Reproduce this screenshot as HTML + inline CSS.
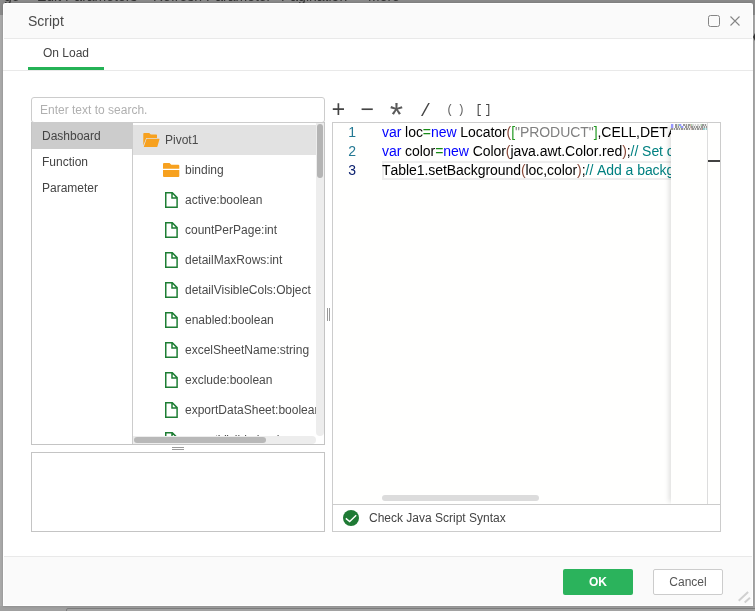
<!DOCTYPE html>
<html><head><meta charset="utf-8">
<style>
*{box-sizing:border-box;margin:0;padding:0}
html,body{width:755px;height:611px;overflow:hidden}
body{background:#ababab;font-family:"Liberation Sans",Arial,sans-serif;font-size:12px;color:#444;position:relative}
.abs{position:absolute}
#topbg{left:0;top:0;width:755px;height:15px;background:#8b8b8b}
#toptxt{will-change:transform;left:0;top:-12px;font-size:14px;line-height:16px;color:#333;white-space:pre}
#toptxt span{position:absolute;top:0}
#botbg{left:0;top:606px;width:755px;height:5px;background:#a0a0a0}
#botbar{left:66px;top:608px;width:695px;height:6px;background:#a2a2a2;border:1px solid #7c7c7c;border-radius:2px}
#rmark{left:753px;top:33px;width:0;height:0;border-top:4px solid transparent;border-bottom:4px solid transparent;border-right:2px solid #333}
#dlg{left:3px;top:3px;width:750px;height:603px;background:#fff;border-radius:2px 2px 0 0;overflow:hidden;will-change:transform;box-shadow:0 0 3px rgba(0,0,0,.22)}
#hdr{left:1px;top:1px;width:748px;height:35px;background:#fafafa;border-bottom:1px solid #e9e9e9}
#title{left:25px;top:10px;font-size:14px;line-height:16px;color:#4a4a4a}
#tabs{left:0;top:36px;width:750px;height:32px;background:#fff;border-bottom:1px solid #e9e9e9}
#tab{left:40px;top:43px;font-size:12px;line-height:14px;color:#444}
#tabline{left:25px;top:64px;width:76px;height:3px;background:#24b256}
#ftr{left:1px;top:553px;width:748px;height:49px;background:#fafafa;border-top:1px solid #e9e9e9}
.btn{height:26px;width:70px;top:566px;border-radius:2px;font-size:12px;text-align:center;line-height:26px}
#ok{left:560px;background:#2bb35c;color:#fff;font-weight:bold}
#cancel{left:650px;background:#fff;border:1px solid #ccc;color:#555;line-height:24px}
#search{left:28px;top:94px;width:294px;height:26px;border:1px solid #ccc;border-radius:3px;background:#fff;color:#b0b0b0;padding:0 0 0 8px;line-height:24px;font-size:12px}
#tree{left:28px;top:119px;width:294px;height:323px;border:1px solid #c4c4c4;background:#fff;overflow:hidden}
#cats{left:0;top:0;width:101px;height:321px;border-right:1px solid #ccc;background:#fff}
.cat{left:0;width:100px;height:26px;line-height:26px;padding-left:10px;color:#444}
.cat.sel{background:#ccc;left:-1px;width:101px;padding-left:11px}
#list{left:101px;top:0;width:191px;height:321px;overflow:hidden}
.row{left:0;width:183px;height:30px;line-height:30px;white-space:nowrap;color:#4a4a4a;overflow:hidden}
.row.sel{background:#e2e2e2}
.row svg{position:absolute}
.row span{position:absolute;top:0}
#vtrack{left:183px;top:0;width:8px;height:313px;background:#ededed;border-radius:0 0 4px 4px}
#vthumb{left:184px;top:1px;width:6px;height:54px;background:#b4b4b4;border-radius:3px}
#htrack{left:0;top:313px;width:183px;height:8px;background:#ededed;border-radius:0 4px 4px 0}
#hthumb{left:1px;top:314px;width:132px;height:6px;background:#b8b8b8;border-radius:3px}
#corner{left:183px;top:313px;width:8px;height:8px;background:#fff}
#lower{left:28px;top:449px;width:294px;height:80px;border:1px solid #c4c4c4;background:#fff}
.grip-h{left:169px;width:12px;height:1px;background:#999}
.grip-v{top:305px;width:1px;height:13px;background:#999}
.op{top:91px;width:29px;height:28px;line-height:28px;text-align:center;font-family:"Liberation Mono",monospace;color:#444;white-space:pre}
#editor{left:329px;top:119px;width:389px;height:410px;border:1px solid #ccc;background:#fffffe;overflow:hidden}
.ln{left:0;width:23px;text-align:right;font-size:14px;line-height:19px;height:19px;color:#237893}
.code{left:49px;font-size:14px;line-height:19px;height:19px;white-space:pre;color:#000;font-kerning:none;letter-spacing:-0.06px}
.k{color:#0000ff}.g{color:#229922}.b{color:#8b4a3a}.s{color:#808080}.c{color:#008080}.o{color:#168a16}
#curline{left:49px;top:38px;width:300px;height:19px;border:2px solid #eee}
#minimap{left:338px;top:0;width:37px;height:382px;background:#fffffe;box-shadow:-5px 0 5px -3px rgba(0,0,0,.13)}
#ruler{left:374px;top:0;width:13px;height:382px;border-left:1px solid #ddd;background:#fffffe}
#mark{left:375px;top:37px;width:12px;height:2px;background:#424242}
#hsb{left:49px;top:372px;width:157px;height:6px;border-radius:3px;background:#dcdcdc}
#status{left:0;top:381px;width:387px;height:27px;border-top:1px solid #ccc;background:#fff}
#stxt{left:36px;top:0;line-height:26px;font-size:12px;color:#444}
.mm{position:absolute;height:2px;opacity:.4;-webkit-mask-image:repeating-linear-gradient(90deg,#000 0 2px,rgba(0,0,0,.35) 2px 3px,#000 3px 4px,rgba(0,0,0,.2) 4px 5px);mask-image:repeating-linear-gradient(90deg,#000 0 2px,rgba(0,0,0,.35) 2px 3px,#000 3px 4px,rgba(0,0,0,.2) 4px 5px)}
</style></head><body>
<div class="abs" id="topbg"></div>
<div class="abs" id="toptxt"><span style="left:4px">ge</span><span style="left:37px">Edit Parameters</span><span style="left:153px">Refresh Parameter</span><span style="left:281px">Pagination</span><span style="left:368px">More</span></div>
<div class="abs" id="botbg"></div><div class="abs" id="botbar"></div>
<div class="abs" id="rmark"></div>
<div class="abs" id="dlg">
 <div class="abs" id="hdr"></div>
 <div class="abs" id="title">Script</div>
 <svg class="abs" style="left:705px;top:12px" width="13" height="13" viewBox="0 0 13 13"><rect x="0.5" y="0.5" width="11" height="11" rx="2" fill="none" stroke="#858585" stroke-width="1"/></svg>
 <svg class="abs" style="left:727px;top:13px" width="11" height="11" viewBox="0 0 11 11"><path d="M0.500 0.500L9.500 9.500M9.500 0.500L0.500 9.500" stroke="#858585" stroke-width="1.100" fill="none"/></svg>
 <div class="abs" id="tabs"></div>
 <div class="abs" id="tab">On Load</div>
 <div class="abs" id="tabline"></div>

 <div class="abs" id="tree">
  <div class="abs" id="cats">
   <div class="abs cat sel" style="top:0">Dashboard</div>
   <div class="abs cat" style="top:26px">Function</div>
   <div class="abs cat" style="top:52px">Parameter</div>
  </div>
  <div class="abs" id="list">
   <div class="abs row sel" style="top:2px"><svg style="left:10px;top:8px" width="17" height="15" viewBox="0 0 17 15"><path d="M0.300 0.800Q0.300 0 1.100 0H6.200L7.800 1.400H13.200Q14 1.400 14 2.200V5H3.200L0.300 12.500z" fill="#f7a11f"/><path d="M3.600 5.700H16.100Q16.700 5.700 16.500 6.300L14.400 13.400Q14.200 14 13.600 14H1.300Q0.700 14 0.900 13.400z" fill="#f7a11f"/></svg><span style="left:32px">Pivot1</span></div>
   <div class="abs row" style="top:32px"><svg style="left:30px;top:8px" width="17" height="15" viewBox="0 0 17 15"><path d="M0 1Q0 0 1 0H6.500L8.300 1.800H15.300Q16.300 1.800 16.300 2.800V5.800H0z" fill="#f7a11f"/><path d="M0 6.900H16.300V13Q16.300 14 15.300 14H1Q0 14 0 13z" fill="#f7a11f"/></svg><span style="left:52px">binding</span></div>
   <div class="abs row" style="top:62px"><svg style="left:32px;top:7px" width="13" height="16" viewBox="0 0 13 16"><path d="M0.750 0.750H7.300L12.100 5.600V15.250H0.750zM7 0.750V5.900H12.100" fill="none" stroke="#1e7e34" stroke-width="1.500" stroke-linejoin="miter"/></svg><span style="left:52px">active:boolean</span></div>
   <div class="abs row" style="top:92px"><svg style="left:32px;top:7px" width="13" height="16" viewBox="0 0 13 16"><path d="M0.750 0.750H7.300L12.100 5.600V15.250H0.750zM7 0.750V5.900H12.100" fill="none" stroke="#1e7e34" stroke-width="1.500" stroke-linejoin="miter"/></svg><span style="left:52px">countPerPage:int</span></div>
   <div class="abs row" style="top:122px"><svg style="left:32px;top:7px" width="13" height="16" viewBox="0 0 13 16"><path d="M0.750 0.750H7.300L12.100 5.600V15.250H0.750zM7 0.750V5.900H12.100" fill="none" stroke="#1e7e34" stroke-width="1.500" stroke-linejoin="miter"/></svg><span style="left:52px">detailMaxRows:int</span></div>
   <div class="abs row" style="top:152px"><svg style="left:32px;top:7px" width="13" height="16" viewBox="0 0 13 16"><path d="M0.750 0.750H7.300L12.100 5.600V15.250H0.750zM7 0.750V5.900H12.100" fill="none" stroke="#1e7e34" stroke-width="1.500" stroke-linejoin="miter"/></svg><span style="left:52px">detailVisibleCols:Object</span></div>
   <div class="abs row" style="top:182px"><svg style="left:32px;top:7px" width="13" height="16" viewBox="0 0 13 16"><path d="M0.750 0.750H7.300L12.100 5.600V15.250H0.750zM7 0.750V5.900H12.100" fill="none" stroke="#1e7e34" stroke-width="1.500" stroke-linejoin="miter"/></svg><span style="left:52px">enabled:boolean</span></div>
   <div class="abs row" style="top:212px"><svg style="left:32px;top:7px" width="13" height="16" viewBox="0 0 13 16"><path d="M0.750 0.750H7.300L12.100 5.600V15.250H0.750zM7 0.750V5.900H12.100" fill="none" stroke="#1e7e34" stroke-width="1.500" stroke-linejoin="miter"/></svg><span style="left:52px">excelSheetName:string</span></div>
   <div class="abs row" style="top:242px"><svg style="left:32px;top:7px" width="13" height="16" viewBox="0 0 13 16"><path d="M0.750 0.750H7.300L12.100 5.600V15.250H0.750zM7 0.750V5.900H12.100" fill="none" stroke="#1e7e34" stroke-width="1.500" stroke-linejoin="miter"/></svg><span style="left:52px">exclude:boolean</span></div>
   <div class="abs row" style="top:272px"><svg style="left:32px;top:7px" width="13" height="16" viewBox="0 0 13 16"><path d="M0.750 0.750H7.300L12.100 5.600V15.250H0.750zM7 0.750V5.900H12.100" fill="none" stroke="#1e7e34" stroke-width="1.500" stroke-linejoin="miter"/></svg><span style="left:52px">exportDataSheet:boolean</span></div>
   <div class="abs row" style="top:302px"><svg style="left:32px;top:7px" width="13" height="16" viewBox="0 0 13 16"><path d="M0.750 0.750H7.300L12.100 5.600V15.250H0.750zM7 0.750V5.900H12.100" fill="none" stroke="#1e7e34" stroke-width="1.500" stroke-linejoin="miter"/></svg><span style="left:52px">exportVisible:boolean</span></div>
   <div class="abs" id="vtrack"></div><div class="abs" id="htrack"></div>
   <div class="abs" id="vthumb"></div><div class="abs" id="hthumb"></div>
  </div>
 </div>
 <div class="abs" id="search">Enter text to search.</div>
 <div class="abs grip-h" style="top:444px"></div><div class="abs grip-h" style="top:446px"></div>
 <div class="abs grip-v" style="left:324px"></div><div class="abs grip-v" style="left:326px"></div>
 <div class="abs" id="lower"></div>

 <div class="abs op" style="left:321px;top:94px;font-size:23px">+</div>
 <div class="abs op" style="left:350px;top:94px;font-size:23px">&#8722;</div>
 <div class="abs op" style="left:379px;top:101px;font-size:34px;color:#5a5a5a">*</div>
 <div class="abs op" style="left:408px;top:94px;font-size:18px">/</div>
 <div class="abs op" style="left:440px;top:93px;font-size:12px;color:#666;letter-spacing:4px">()</div>
 <div class="abs op" style="left:467px;top:93px;font-size:12px;letter-spacing:2px">[]</div>
 <div class="abs" id="editor">
  <div class="abs ln" style="top:0">1</div>
  <div class="abs ln" style="top:19px">2</div>
  <div class="abs ln" style="top:38px;color:#0b216f">3</div>
  <div class="abs" id="curline"></div>
  <div class="abs code" style="top:0"><span class="k">var</span> loc<span class="o">=</span><span class="k">new</span> Locator<span class="b">(</span><span class="g">[</span><span class="s">"PRODUCT"</span><span class="g">]</span>,CELL,DETAIL<span class="b">)</span>;</div>
  <div class="abs code" style="top:19px"><span class="k">var</span> color<span class="o">=</span><span class="k">new</span> Color<span class="b">(</span>java.awt.Color.red<span class="b">)</span>;<span class="c">// Set color to red</span></div>
  <div class="abs code" style="top:38px">Table1.setBackground<span class="b">(</span>loc,color<span class="b">)</span>;<span class="c">// Add a background color</span></div>
  <div class="abs" id="minimap">
   <i class="mm" style="top:1px;left:0;width:3px;background:#00f"></i><i class="mm" style="top:1px;left:4px;width:3px;background:#000"></i><i class="mm" style="top:1px;left:7px;width:1px;background:#168a16"></i><i class="mm" style="top:1px;left:8px;width:3px;background:#00f"></i><i class="mm" style="top:1px;left:12px;width:7px;background:#000"></i><i class="mm" style="top:1px;left:19px;width:1px;background:#8b4a3a"></i><i class="mm" style="top:1px;left:20px;width:1px;background:#319331"></i><i class="mm" style="top:1px;left:21px;width:9px;background:#999"></i><i class="mm" style="top:1px;left:30px;width:1px;background:#319331"></i><i class="mm" style="top:1px;left:31px;width:6px;background:#000"></i>
   <i class="mm" style="top:3px;left:0;width:3px;background:#00f"></i><i class="mm" style="top:3px;left:4px;width:5px;background:#000"></i><i class="mm" style="top:3px;left:9px;width:1px;background:#168a16"></i><i class="mm" style="top:3px;left:10px;width:3px;background:#00f"></i><i class="mm" style="top:3px;left:14px;width:5px;background:#000"></i><i class="mm" style="top:3px;left:19px;width:1px;background:#8b4a3a"></i><i class="mm" style="top:3px;left:20px;width:17px;background:#000"></i>
   <i class="mm" style="top:5px;left:0;width:20px;background:#000"></i><i class="mm" style="top:5px;left:20px;width:1px;background:#8b4a3a"></i><i class="mm" style="top:5px;left:21px;width:9px;background:#000"></i><i class="mm" style="top:5px;left:30px;width:1px;background:#8b4a3a"></i><i class="mm" style="top:5px;left:31px;width:1px;background:#000"></i><i class="mm" style="top:5px;left:32px;width:5px;background:#008080"></i>
  </div>
  <div class="abs" id="ruler"></div>
  <div class="abs" id="mark"></div>
  <div class="abs" id="hsb"></div>
  <div class="abs" id="status">
   <svg class="abs" style="left:10px;top:5px" width="16" height="16" viewBox="0 0 16 16"><circle cx="8" cy="8" r="8" fill="#1f7a35"/><path d="M2.800 8.400L6.700 11.600L13.200 5.200" stroke="#fff" stroke-width="1.400" fill="none"/></svg>
   <div class="abs" id="stxt">Check Java Script Syntax</div>
  </div>
 </div>

 <div class="abs" id="ftr"></div>
 <div class="abs btn" id="ok">OK</div>
 <div class="abs btn" id="cancel">Cancel</div>
 <svg class="abs" style="left:735px;top:588px" width="13" height="13" viewBox="0 0 13 13"><path d="M0.700 9.700L10.100 1M6.700 11.400L12 6.800" stroke="#d0d0d0" stroke-width="2"/></svg>
</div>
</body></html>
